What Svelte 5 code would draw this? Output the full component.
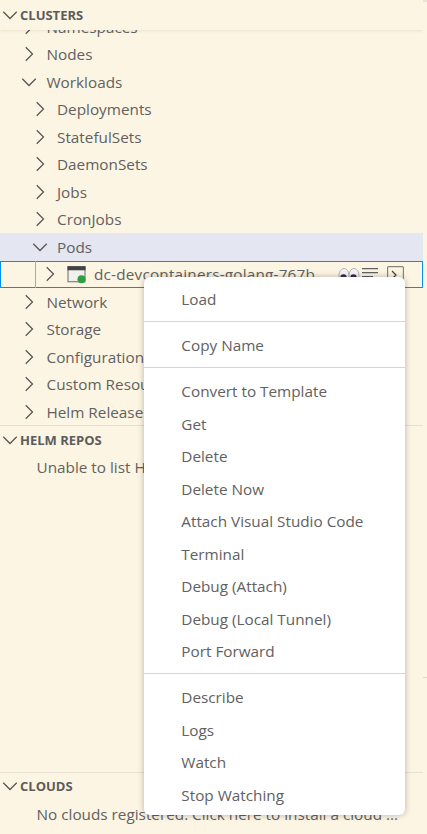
<script lang="ts">
    const rows = [
        { label: "Nodes", level: 1, open: false },
        { label: "Workloads", level: 1, open: true },
        { label: "Deployments", level: 2, open: false },
        { label: "StatefulSets", level: 2, open: false },
        { label: "DaemonSets", level: 2, open: false },
        { label: "Jobs", level: 2, open: false },
        { label: "CronJobs", level: 2, open: false },
        { label: "Pods", level: 2, open: true, hover: true },
    ];

    const rowsAfter = ["Network", "Storage", "Configuration", "Custom Resources", "Helm Releases"];

    const menuGroups = [
        ["Load"],
        ["Copy Name"],
        [
            "Convert to Template",
            "Get",
            "Delete",
            "Delete Now",
            "Attach Visual Studio Code",
            "Terminal",
            "Debug (Attach)",
            "Debug (Local Tunnel)",
            "Port Forward",
        ],
        ["Describe", "Logs", "Watch", "Stop Watching"],
    ];
</script>

{#snippet chevron(open: boolean)}
    <svg class="chevron" viewBox="0 0 16 16" fill="none" stroke="currentColor" stroke-width="1">
        {#if open}
            <path d="M2.6 5.4 8 10.8l5.4-5.4" />
        {:else}
            <path d="M5.4 2.6 10.8 8l-5.4 5.4" />
        {/if}
    </svg>
{/snippet}

<div class="window">
    <div class="sidebar">
        <section class="clusters">
            <header class="heading stuck">
                {@render chevron(true)}
                <h3>Clusters</h3>
            </header>
            <div class="tree">
                <div class="row level-1">
                    {@render chevron(false)}
                    <span class="label">Namespaces</span>
                </div>
                {#each rows as row}
                    <div class="row level-{row.level}" class:hover={row.hover}>
                        {@render chevron(row.open)}
                        <span class="label">{row.label}</span>
                    </div>
                {/each}
                <div class="row level-3 selected">
                    <span class="guide"></span>
                    {@render chevron(false)}
                    <svg class="pod-icon" viewBox="0 0 20 20">
                        <rect x="1" y="2.75" width="17" height="15" fill="#f1f0ea" stroke="#6a6a6a" stroke-width="1" />
                        <rect x="0.5" y="2.25" width="18" height="4" fill="#424242" />
                        <circle cx="14.5" cy="15.25" r="4" fill="#2f9e3f" />
                    </svg>
                    <span class="label pod-name">dc-devcontainers-golang-767b</span>
                    <span class="actions">
                        <svg class="eyes" viewBox="0 0 22 16">
                            <ellipse cx="6" cy="9.5" rx="5" ry="7" fill="#f4f4f4" stroke="#b5b5b5" />
                            <ellipse cx="16" cy="9.5" rx="5" ry="7" fill="#f4f4f4" stroke="#b5b5b5" />
                            <circle cx="5.5" cy="11.5" r="3.2" fill="#3b2a55" />
                            <circle cx="15.5" cy="11.5" r="3.2" fill="#3b2a55" />
                        </svg>
                        <svg class="lines" viewBox="0 0 16 12" stroke="#616161" stroke-width="1.2">
                            <path d="M0 .6h16M0 4.6h16M0 8.6h11" />
                        </svg>
                        <svg class="term" viewBox="0 0 17 17" fill="none">
                            <rect x="0.6" y="0.6" width="15.8" height="15.8" rx="1" stroke="#8b8478" stroke-width="1.2" />
                            <path d="M5 5l4 4-4 4" stroke="#424242" stroke-width="1.2" />
                        </svg>
                    </span>
                </div>
                {#each rowsAfter as label}
                    <div class="row level-1">
                        {@render chevron(false)}
                        <span class="label">{label}</span>
                    </div>
                {/each}
            </div>
        </section>

        <section class="repos">
            <header class="heading">
                {@render chevron(true)}
                <h3>Helm Repos</h3>
            </header>
            <div class="message">Unable to list Helm Repos</div>
        </section>

        <section class="clouds">
            <header class="heading">
                {@render chevron(true)}
                <h3>Clouds</h3>
            </header>
            <div class="message">No clouds registered. Click here to install a cloud ...</div>
        </section>
    </div>

    <div class="gutter">
        <span class="tick top"></span>
        <span class="tick low"></span>
    </div>

    <ul class="menu">
        {#each menuGroups as group, i}
            {#if i > 0}
                <li class="separator"></li>
            {/if}
            {#each group as item}
                <li class="item">{item}</li>
            {/each}
        {/each}
    </ul>
</div>

<style>
    :global(body) {
        margin: 0;
        background: #fdf5e3;
    }

    .window {
        position: relative;
        display: flex;
        width: 427px;
        height: 834px;
        overflow: hidden;
        background: #fdf5e3;
        color: #616161;
        font-family: "Open Sans", "Noto Sans", sans-serif;
        font-size: 15.3px;
    }

    .sidebar {
        display: flex;
        flex-direction: column;
        width: 423px;
        height: 100%;
    }

    .gutter {
        position: relative;
        width: 4px;
    }

    .tick {
        position: absolute;
        left: 0;
        width: 4px;
    }

    .tick.top {
        top: 0;
        height: 2px;
        background: #e6e4dc;
    }

    .tick.low {
        top: 677px;
        height: 1px;
        background: #ddd8c9;
    }

    .clusters {
        position: relative;
        height: 425px;
        overflow: hidden;
    }

    .repos {
        flex: 1;
        border-top: 1px solid #e5e0d0;
    }

    .clouds {
        height: 61px;
        border-top: 1px solid #e5e0d0;
    }

    .heading {
        display: flex;
        align-items: center;
        height: 27.5px;
        background: #fdf5e3;
    }

    .clouds .heading {
        height: 26px;
        margin-bottom: 1.5px;
    }

    .heading.stuck {
        position: absolute;
        top: 0;
        left: 0;
        right: 0;
        z-index: 2;
        height: 30px;
        box-shadow: 0 1px 3px rgba(0, 0, 0, 0.08);
    }

    .heading h3 {
        margin: 0;
        font-size: 13px;
        font-weight: 700;
        text-transform: uppercase;
        color: #5c5c5c;
    }

    .chevron {
        flex: none;
        width: 20px;
        height: 20px;
        color: #555;
    }

    .tree {
        padding-top: 13px;
    }

    .row {
        position: relative;
        display: flex;
        align-items: center;
        height: 27.5px;
        white-space: nowrap;
    }

    .level-1 {
        padding-left: 19px;
    }

    .level-2 {
        padding-left: 29.5px;
    }

    .level-1 .label,
    .level-2 .label {
        margin-left: 7.5px;
    }

    .level-3 {
        padding-left: 39.5px;
    }

    .hover {
        background: #e4e6f1;
    }

    .selected {
        outline: 1px solid #0090f1;
        outline-offset: -1px;
    }

    .guide {
        position: absolute;
        left: 35px;
        top: 0;
        bottom: 0;
        width: 1px;
        background: #a9a9a9;
    }

    .pod-icon {
        flex: none;
        width: 20px;
        height: 20px;
        margin-left: 7px;
    }

    .pod-name {
        width: 237px;
        margin-left: 7.5px;
        overflow: hidden;
        letter-spacing: 0.2px;
    }

    .actions {
        display: flex;
        align-items: center;
        gap: 2px;
        margin-left: 6.5px;
    }

    .eyes {
        width: 22px;
        height: 16px;
    }

    .lines {
        width: 16px;
        height: 12px;
    }

    .term {
        width: 17px;
        height: 17px;
        margin-left: 7px;
    }

    .message {
        padding-left: 36.5px;
        line-height: 27.5px;
        white-space: nowrap;
    }

    .menu {
        position: absolute;
        top: 277px;
        left: 144px;
        z-index: 5;
        box-sizing: border-box;
        width: 261px;
        height: 538px;
        margin: 0;
        padding: 6px 0;
        list-style: none;
        background: #fff;
        border-radius: 6px;
        box-shadow: 0 0 6px rgba(0, 0, 0, 0.28);
        color: #616161;
    }

    .item {
        height: 32.5px;
        padding-left: 37.3px;
        line-height: 32px;
        white-space: nowrap;
    }

    .separator {
        height: 1px;
        margin: 5.5px 0 7px;
        background: #d4d4d4;
    }
</style>
